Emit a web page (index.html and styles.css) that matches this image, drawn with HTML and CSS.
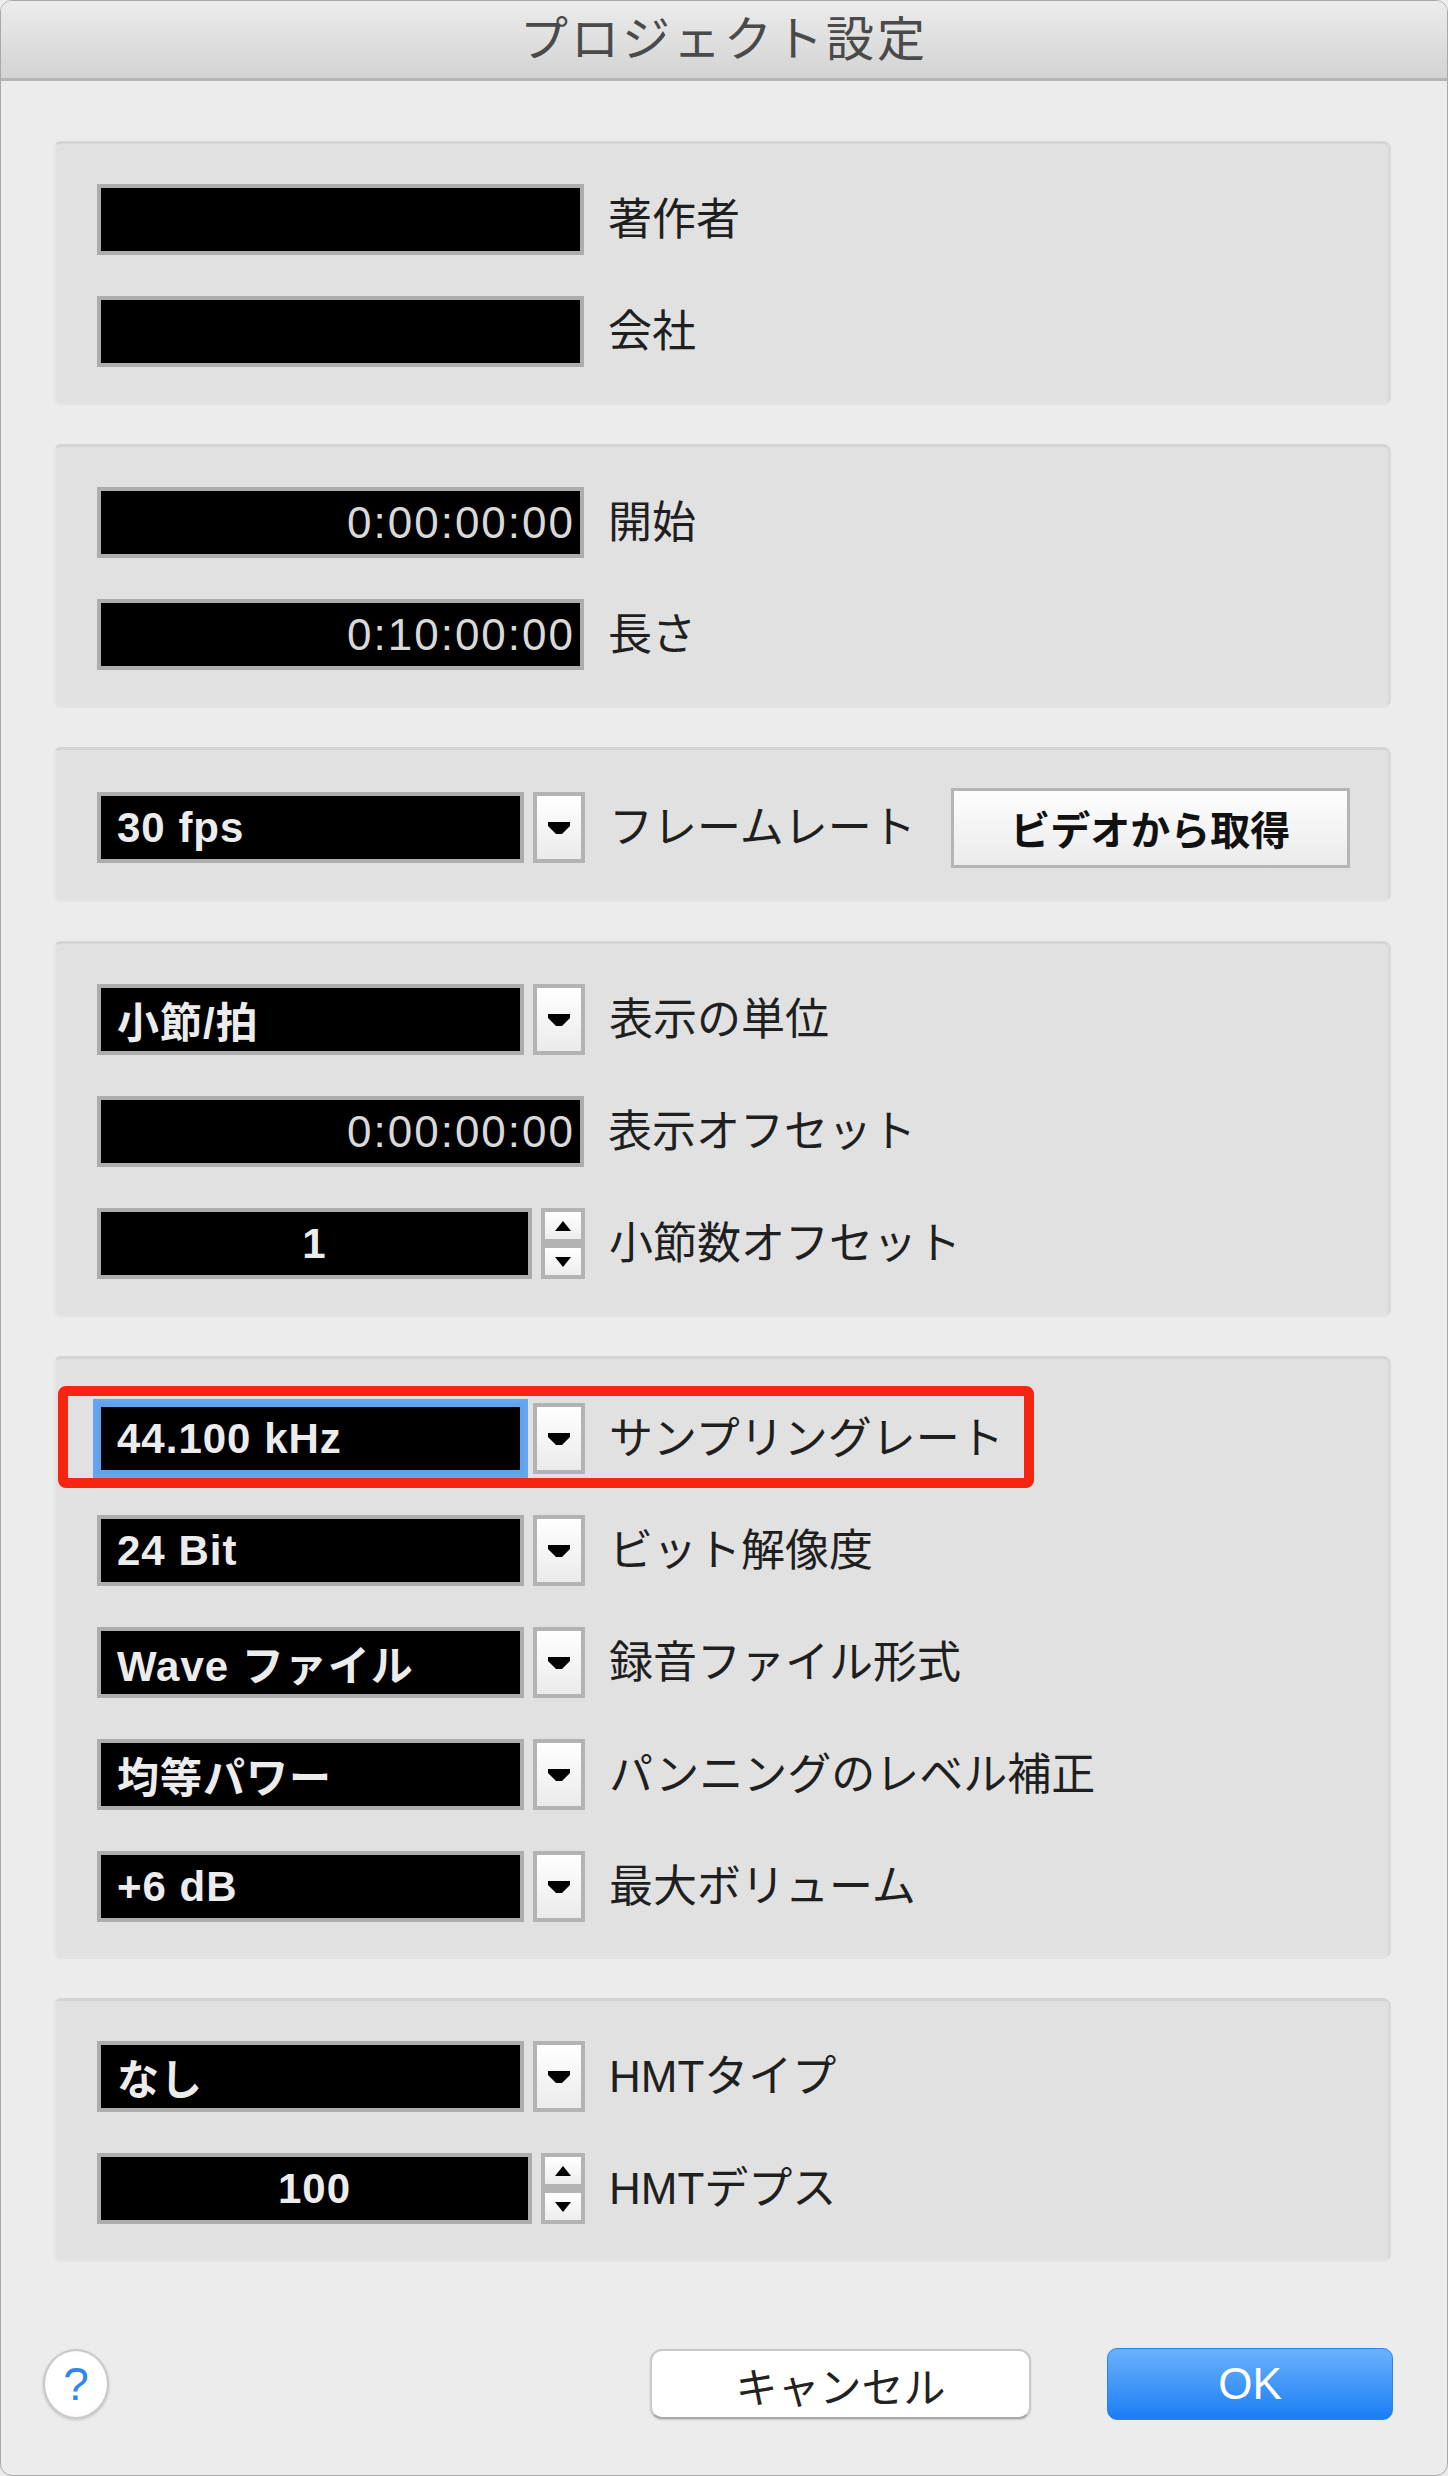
FILE: index.html
```html
<!DOCTYPE html>
<html lang="ja">
<head>
    <meta charset="UTF-8">
    <meta name="viewport" content="width=device-width, initial-scale=1.0">
    <title>プロジェクト設定</title>
    <link rel="stylesheet" href="styles.css">
</head>
<body>

<div class="window">
    <header class="titlebar">
        <h1>プロジェクト設定</h1>
    </header>

    <main class="groups">
        <!-- Project info -->
        <section class="group">
            <div class="row">
                <div class="field"></div>
                <span class="caption">著作者</span>
            </div>
            <div class="row">
                <div class="field"></div>
                <span class="caption">会社</span>
            </div>
        </section>

        <!-- Start / length -->
        <section class="group">
            <div class="row">
                <div class="field time">0:00:00:00</div>
                <span class="caption">開始</span>
            </div>
            <div class="row">
                <div class="field time">0:10:00:00</div>
                <span class="caption">長さ</span>
            </div>
        </section>

        <!-- Frame rate -->
        <section class="group single">
            <div class="row">
                <div class="field short">30 fps</div>
                <div class="drop"><svg width="22" height="12" viewBox="0 0 22 12"><polygon points="0,0 22,0 22,4 14,12 8,12 0,4"/></svg></div>
                <span class="caption">フレームレート</span>
                <button class="fetch">ビデオから取得</button>
            </div>
        </section>

        <!-- Display -->
        <section class="group">
            <div class="row">
                <div class="field short">小節/拍</div>
                <div class="drop"><svg width="22" height="12" viewBox="0 0 22 12"><polygon points="0,0 22,0 22,4 14,12 8,12 0,4"/></svg></div>
                <span class="caption">表示の単位</span>
            </div>
            <div class="row">
                <div class="field time">0:00:00:00</div>
                <span class="caption">表示オフセット</span>
            </div>
            <div class="row">
                <div class="field spin num">1</div>
                <div class="spinner">
                    <span><svg width="16" height="10" viewBox="0 0 16 10"><polygon points="8,0 16,10 0,10"/></svg></span>
                    <span><svg width="16" height="10" viewBox="0 0 16 10"><polygon points="0,0 16,0 8,10"/></svg></span>
                </div>
                <span class="caption">小節数オフセット</span>
            </div>
        </section>

        <!-- Audio -->
        <section class="group audio">
            <div class="row">
                <div class="field short focus">44.100 kHz</div>
                <div class="drop"><svg width="22" height="12" viewBox="0 0 22 12"><polygon points="0,0 22,0 22,4 14,12 8,12 0,4"/></svg></div>
                <span class="caption">サンプリングレート</span>
                <div class="highlight"></div>
            </div>
            <div class="row">
                <div class="field short">24 Bit</div>
                <div class="drop"><svg width="22" height="12" viewBox="0 0 22 12"><polygon points="0,0 22,0 22,4 14,12 8,12 0,4"/></svg></div>
                <span class="caption">ビット解像度</span>
            </div>
            <div class="row">
                <div class="field short">Wave ファイル</div>
                <div class="drop"><svg width="22" height="12" viewBox="0 0 22 12"><polygon points="0,0 22,0 22,4 14,12 8,12 0,4"/></svg></div>
                <span class="caption">録音ファイル形式</span>
            </div>
            <div class="row">
                <div class="field short">均等パワー</div>
                <div class="drop"><svg width="22" height="12" viewBox="0 0 22 12"><polygon points="0,0 22,0 22,4 14,12 8,12 0,4"/></svg></div>
                <span class="caption">パンニングのレベル補正</span>
            </div>
            <div class="row">
                <div class="field short">+6 dB</div>
                <div class="drop"><svg width="22" height="12" viewBox="0 0 22 12"><polygon points="0,0 22,0 22,4 14,12 8,12 0,4"/></svg></div>
                <span class="caption">最大ボリューム</span>
            </div>
        </section>

        <!-- HMT -->
        <section class="group">
            <div class="row">
                <div class="field short">なし</div>
                <div class="drop"><svg width="22" height="12" viewBox="0 0 22 12"><polygon points="0,0 22,0 22,4 14,12 8,12 0,4"/></svg></div>
                <span class="caption">HMTタイプ</span>
            </div>
            <div class="row">
                <div class="field spin num">100</div>
                <div class="spinner">
                    <span><svg width="16" height="10" viewBox="0 0 16 10"><polygon points="8,0 16,10 0,10"/></svg></span>
                    <span><svg width="16" height="10" viewBox="0 0 16 10"><polygon points="0,0 16,0 8,10"/></svg></span>
                </div>
                <span class="caption">HMTデプス</span>
            </div>
        </section>
    </main>

    <footer class="actions">
        <button class="help">?</button>
        <button class="cancel">キャンセル</button>
        <button class="ok">OK</button>
    </footer>
</div>

</body>
</html>
```

FILE: styles.css
```css
body {
    margin: 0;
    background: #ececec;
    font-family: "Liberation Sans", "Noto Sans CJK JP", sans-serif;
}

.window {
    width: 1448px;
    height: 2476px;
    box-sizing: border-box;
    background: #ececec;
    border: 1px solid #a9a9a9;
    border-radius: 12px;
    overflow: hidden;
}

.titlebar {
    height: 80px;
    box-sizing: border-box;
    background: linear-gradient(#ececec, #d3d3d3);
    border-bottom: 3px solid #b5b5b5;
    display: flex;
    align-items: center;
    justify-content: center;
}

.titlebar h1 {
    margin: 0;
    font-size: 48px;
    font-weight: 400;
    letter-spacing: 3px;
    line-height: 1;
    color: #4a4a4a;
}

.groups {
    display: flex;
    flex-direction: column;
    gap: 39px;
    padding: 60px 56px 0 52px;
}

.group {
    display: flex;
    flex-direction: column;
    gap: 41px;
    padding: 40px 41px 35px;
    background: #e1e1e1;
    border: 3px solid #e4e4e4;
    border-top-color: #d4d4d4;
    border-right-color: #d9d9d9;
    border-left-color: #e6e6e6;
    border-radius: 8px;
}

.group.single {
    padding-top: 42px;
    padding-bottom: 36px;
}

.group.audio {
    padding-top: 44px;
    padding-bottom: 34px;
}

.row {
    position: relative;
    display: flex;
    align-items: center;
    height: 71px;
}

.field {
    box-sizing: border-box;
    flex-shrink: 0;
    width: 487px;
    height: 71px;
    display: flex;
    align-items: center;
    padding: 0 16px;
    background: #000;
    border: 4px solid #adadad;
    color: #ececec;
    font-size: 42px;
    font-weight: 700;
    letter-spacing: 1px;
    white-space: nowrap;
}

.field.short {
    width: 427px;
}

.field.spin {
    width: 435px;
}

.field.time {
    justify-content: flex-end;
    padding-right: 5px;
    font-size: 44px;
    font-weight: 400;
    letter-spacing: 2px;
    color: #d9d9d9;
}

.field.num {
    justify-content: center;
}

.field.focus {
    border-color: #5fa2ef;
    box-shadow: 0 0 0 4px #64a6ef;
}

.drop {
    box-sizing: border-box;
    flex-shrink: 0;
    width: 52px;
    height: 71px;
    margin-left: 9px;
    display: flex;
    align-items: center;
    justify-content: center;
    border: 4px solid #b3b3b3;
    background: linear-gradient(#ffffff, #ebebeb);
}

.spinner {
    box-sizing: border-box;
    flex-shrink: 0;
    width: 44px;
    height: 71px;
    margin-left: 9px;
    padding: 4px;
    display: flex;
    flex-direction: column;
    gap: 9px;
    background: #b3b3b3;
}

.spinner span {
    flex: 1;
    display: flex;
    align-items: center;
    justify-content: center;
    background: linear-gradient(#ffffff, #ededed);
}

.caption {
    flex-shrink: 0;
    margin-left: 24px;
    font-size: 44px;
    line-height: 1;
    color: #1f1f1f;
    white-space: nowrap;
}

.fetch {
    box-sizing: border-box;
    width: 399px;
    height: 80px;
    margin-left: 35px;
    flex-shrink: 0;
    border: 3px solid #b5b5b5;
    background: linear-gradient(#fdfdfd, #ebebeb);
    font-family: inherit;
    font-size: 40px;
    font-weight: 700;
    color: #111;
    padding: 0;
}

/* red box drawn around the sample rate row */
.highlight {
    position: absolute;
    left: -39px;
    top: -17px;
    width: 976px;
    height: 102px;
    box-sizing: border-box;
    border: 10px solid #f5250f;
    border-radius: 8px;
}

.actions {
    display: flex;
    align-items: center;
    margin-top: 86px;
    padding: 0 54px 0 42px;
}

.actions button {
    font-family: inherit;
    padding: 0;
    box-sizing: border-box;
}

.help {
    width: 66px;
    height: 70px;
    border-radius: 50%;
    border: 2px solid #c8c8c8;
    background: radial-gradient(#ffffff 60%, #f2f2f2);
    box-shadow: 0 1px 3px rgba(0, 0, 0, 0.2);
    color: #2f86f0;
    font-size: 46px;
}

.cancel {
    width: 381px;
    height: 70px;
    margin-left: auto;
    border-radius: 12px;
    border: 2px solid #c9c9c9;
    border-bottom-color: #a9a9a9;
    background: #ffffff;
    box-shadow: 0 1px 2px rgba(0, 0, 0, 0.15);
    color: #222;
    font-size: 42px;
}

.ok {
    width: 286px;
    height: 72px;
    margin-left: 76px;
    border-radius: 10px;
    border: 1px solid #2a83ee;
    background: linear-gradient(#6bb2fc, #1a7df5);
    color: #ffffff;
    font-size: 44px;
}
```
